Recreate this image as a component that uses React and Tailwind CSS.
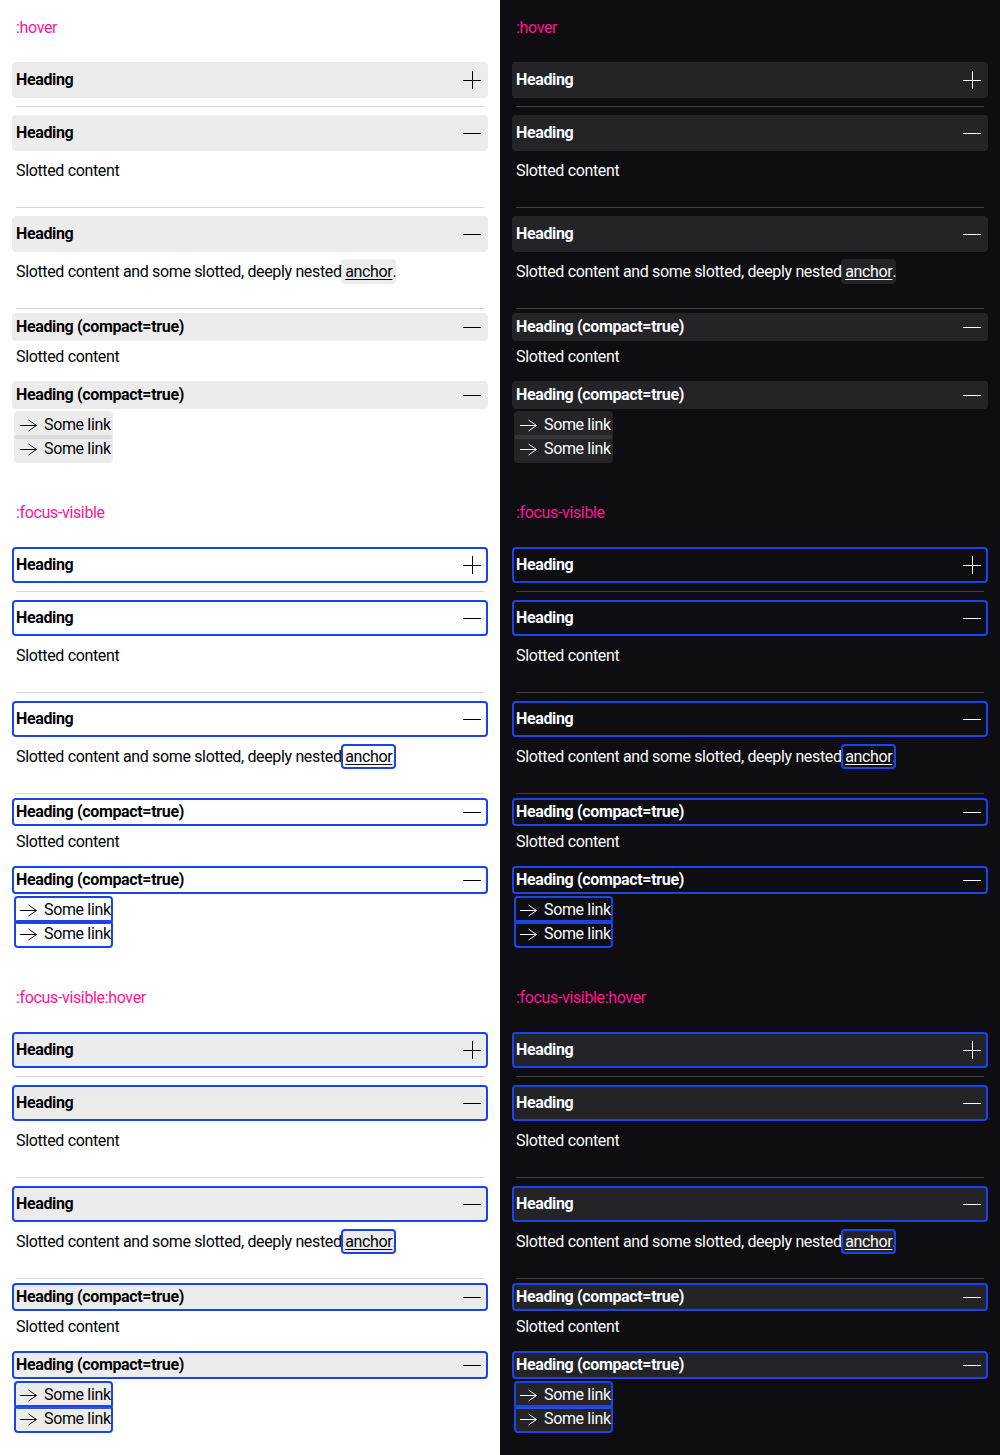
import React from "react";

const themes = {
  light: {
    bg: "bg-white",
    text: "text-[#010205]",
    divider: "border-[#d8d8db]",
    hover: "bg-[rgba(148,149,152,0.18)]",
    stroke: "#010205",
  },
  dark: {
    bg: "bg-[#0e0e12]",
    text: "text-[#fbfcff]",
    divider: "border-[#404044]",
    hover: "bg-[rgba(126,127,130,0.2)]",
    stroke: "#fbfcff",
  },
};

function Overlay({ t, s, className }) {
  const hover = s.hover;
  const focus = s.focus;
  return (
    <span
      className={[
        "pointer-events-none absolute rounded-[4px]",
        className,
        hover ? t.hover : "",
        focus ? "border-2 border-[#1a44ea]" : "",
      ].join(" ")}
    />
  );
}

function Icon({ open, stroke }) {
  return (
    <svg width="24" height="24" viewBox="0 0 24 24" className="relative shrink-0" fill="none">
      <path d="M3 12.5h18" stroke={stroke} strokeWidth="1" />
      {!open && <path d="M12.5 3v18" stroke={stroke} strokeWidth="1" />}
    </svg>
  );
}

function Arrow({ stroke }) {
  return (
    <svg width="24" height="24" viewBox="0 0 24 24" className="relative shrink-0" fill="none">
      <path d="M4 12.5h16.5M12.5 7l8 5.5-8 5.5" stroke={stroke} strokeWidth="1" />
    </svg>
  );
}

function Heading({ t, s, open, compact, children }) {
  return (
    <div className={compact ? "py-1" : "py-2"}>
      <div
        className={[
          "relative -mx-1 flex items-center justify-between px-1",
          compact ? "h-7" : "h-9",
        ].join(" ")}
      >
        <Overlay t={t} s={s} className="inset-0" />
        <span className="relative text-base font-bold leading-6">{children}</span>
        <Icon open={open} stroke={t.stroke} />
      </div>
    </div>
  );
}

function Accordion({ t, s, open, compact, heading, children }) {
  return (
    <div className={compact ? "" : `border-b ${t.divider}`}>
      <Heading t={t} s={s} open={open} compact={compact}>
        {heading}
      </Heading>
      {open && <div className={compact ? "pb-2" : "pb-6"}>{children}</div>}
    </div>
  );
}

function Anchor({ t, s }) {
  return (
    <span className="relative inline-block leading-6">
      <Overlay t={t} s={s} className="-left-1 -right-1 top-[-1px] bottom-0" />
      <span className="relative underline underline-offset-2">anchor</span>
    </span>
  );
}

function SomeLink({ t, s }) {
  return (
    <div className="relative flex h-6 w-fit items-center gap-1">
      <Overlay t={t} s={s} className="-inset-0.5" />
      <Arrow stroke={t.stroke} />
      <span className="relative leading-6">Some link</span>
    </div>
  );
}

function Section({ t, label, s }) {
  return (
    <div className="flex flex-col pt-4 pb-4">
      <div className="h-6 leading-6 text-[#ff1493]">{label}</div>
      <div className="mt-[14px] flex flex-col">
        <Accordion t={t} s={s} heading="Heading" />
        <Accordion t={t} s={s} open heading="Heading">
          <p className="leading-6">Slotted content</p>
        </Accordion>
        <Accordion t={t} s={s} open heading="Heading">
          <p className="leading-6">
            Slotted content and some slotted, deeply nested <Anchor t={t} s={s} />.
          </p>
        </Accordion>
        <Accordion t={t} s={s} open compact heading="Heading (compact=true)">
          <p className="leading-6">Slotted content</p>
        </Accordion>
        <Accordion t={t} s={s} open compact heading="Heading (compact=true)">
          <SomeLink t={t} s={s} />
          <SomeLink t={t} s={s} />
        </Accordion>
      </div>
    </div>
  );
}

function Column({ theme }) {
  const t = themes[theme];
  return (
    <div className={`w-[500px] px-4 ${t.bg} ${t.text}`}>
      <Section t={t} label=":hover" s={{ hover: true }} />
      <Section t={t} label=":focus-visible" s={{ focus: true }} />
      <Section t={t} label=":focus-visible:hover" s={{ hover: true, focus: true }} />
    </div>
  );
}

export default function App() {
  return (
    <div className="flex w-[1000px] font-['Roboto',sans-serif] text-base tracking-[-0.35px]">
      <Column theme="light" />
      <Column theme="dark" />
    </div>
  );
}
